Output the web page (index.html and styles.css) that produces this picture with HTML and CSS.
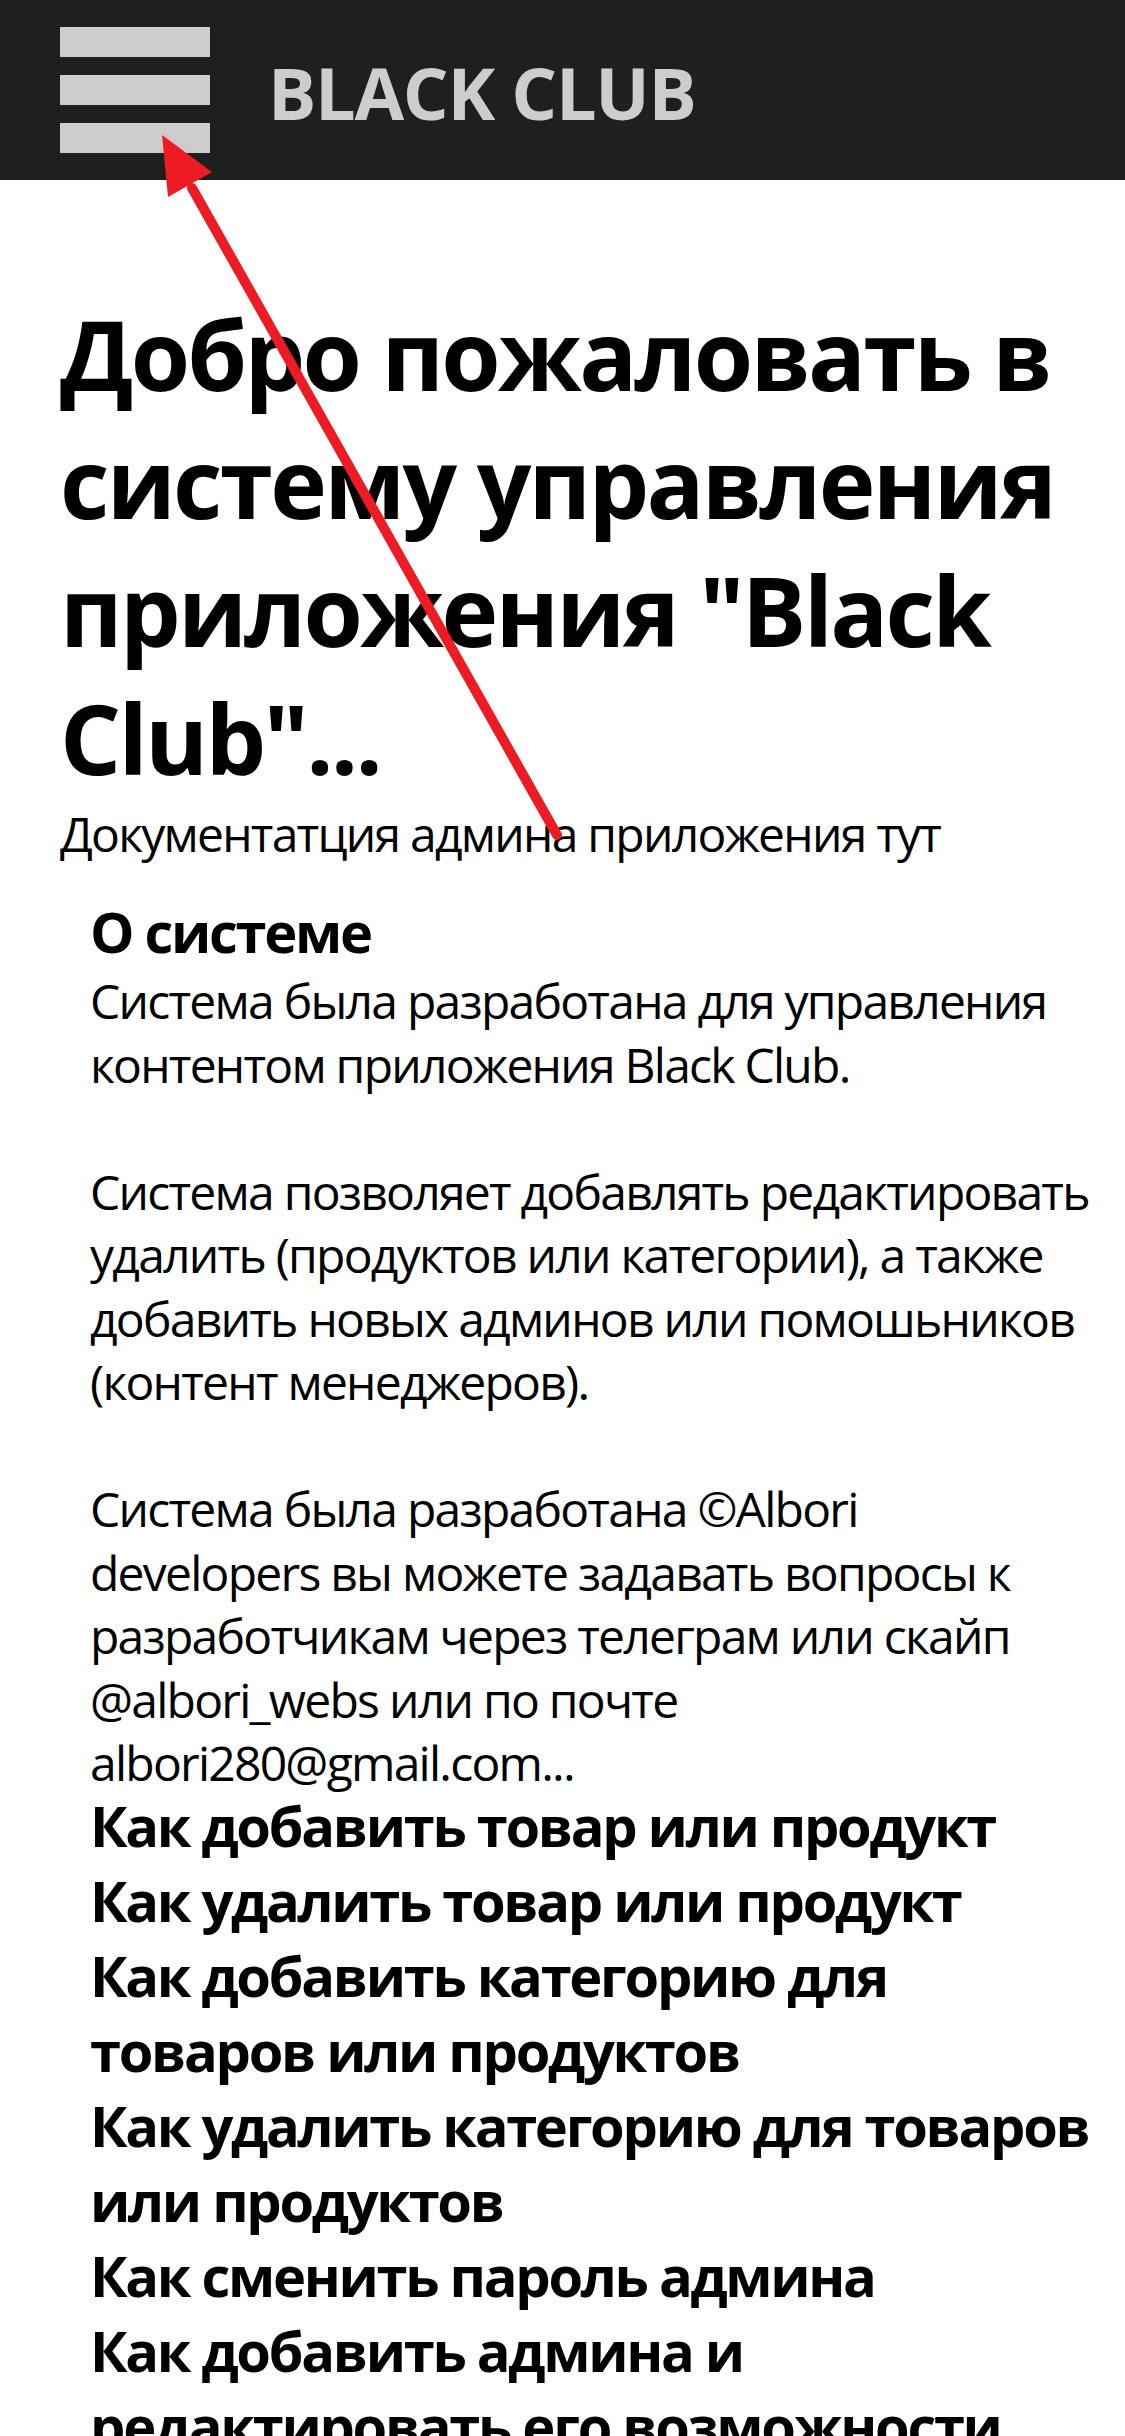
FILE: index.html
```html
<!DOCTYPE html>
<html lang="ru">
<head>
<meta charset="utf-8">
<title>Black Club — админ</title>
<link rel="stylesheet" href="styles.css">
</head>
<body>
<header class="topbar">
  <div class="burger"><span></span><span></span><span></span></div>
  <div class="brand">BLACK CLUB</div>
</header>
<main class="content">
  <h1 class="title">Добро пожаловать в систему управления приложения "Black Club"...</h1>
  <p class="lead">Документатция админа приложения тут</p>
  <section class="docs">
    <h3 class="doc-heading">О системе</h3>
    <p class="doc-text">Система была разработана для управления контентом приложения Black Club.<br><br>Система позволяет добавлять редактировать удалить (продуктов или категории), а также добавить новых админов или помошьников (контент менеджеров).<br><br>Система была разработана ©Albori developers вы можете задавать вопросы к разработчикам через телеграм или скайп @albori_webs или по почте albori280@gmail.com...</p>
    <ul class="doc-links">
      <li>Как добавить товар или продукт</li>
      <li>Как удалить товар или продукт</li>
      <li>Как добавить категорию для товаров или продуктов</li>
      <li>Как удалить категорию для товаров или продуктов</li>
      <li>Как сменить пароль админа</li>
      <li>Как добавить админа и редактировать его возможности</li>
    </ul>
  </section>
</main>
<svg class="annotation" width="1125" height="900" viewBox="0 0 1125 900" aria-hidden="true">
  <line x1="557" y1="835" x2="192" y2="188" stroke="#ed1c24" stroke-width="10" stroke-linecap="round"/>
  <polygon points="162,135 212,172 168,197" fill="#ed1c24"/>
</svg>
</body>
</html>
```
FILE: styles.css
```css
html, body {
  margin: 0;
  padding: 0;
}

body {
  position: relative;
  font-family: "Open Sans", "Segoe UI", "Noto Sans", sans-serif;
  color: #000;
  background: #fff;
}

.topbar {
  display: flex;
  align-items: center;
  height: 180px;
  padding-left: 60px;
  background: #1f1f1f;
}

.burger {
  display: flex;
  flex-direction: column;
  gap: 18px;
  width: 150px;
}

.burger span {
  display: block;
  height: 30px;
  background: #cccccc;
}

.brand {
  margin-left: 58px;
  padding-top: 4px;
  font-size: 72px;
  font-weight: 700;
  line-height: 98px;
  letter-spacing: -1.3px;
  color: #cdcdcd;
}

.content {
  padding: 0 30px 0 60px;
}

.title {
  margin: 110px 0 0;
  font-size: 96px;
  font-weight: 700;
  line-height: 128px;
  letter-spacing: -2.7px;
}

.lead {
  margin: 0;
  font-size: 48px;
  line-height: 64px;
  letter-spacing: -1.75px;
}

.docs {
  margin: 28px 0 0 30px;
}

.doc-heading {
  margin: 0;
  font-size: 56px;
  font-weight: 700;
  line-height: 75px;
  letter-spacing: -2.3px;
}

.doc-text {
  margin: 0;
  font-size: 48px;
  line-height: 63.5px;
  letter-spacing: -1.75px;
}

.doc-links {
  list-style: none;
  margin: -7px 0 0;
  padding: 0;
  font-size: 56px;
  font-weight: 700;
  line-height: 75px;
  letter-spacing: -2.3px;
}

.annotation {
  position: absolute;
  top: 0;
  left: 0;
  z-index: 10;
  pointer-events: none;
}
```
